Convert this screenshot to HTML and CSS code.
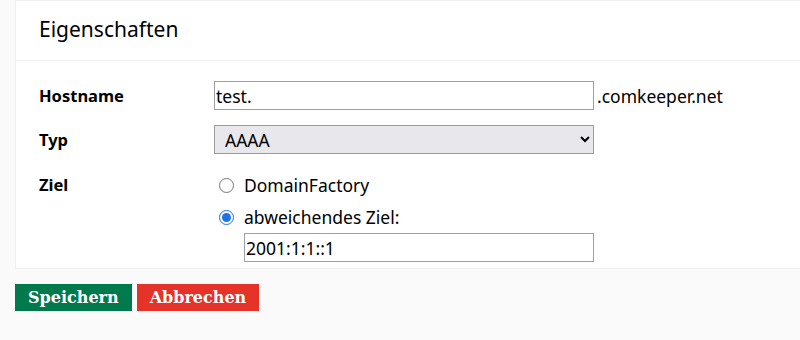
FILE: index.html
```html
<!DOCTYPE html>
<html lang="de">
<head>
    <meta charset="UTF-8">
    <title>Eigenschaften</title>
    <link rel="stylesheet" href="styles.css">
</head>
<body>

    <div class="panel">
        <h2 class="panel-title">Eigenschaften</h2>

        <form id="record-form" class="panel-body">
            <div class="row">
                <label for="hostname" class="row-label">Hostname</label>
                <div class="row-field">
                    <input type="text" id="hostname" class="text-input" value="test.">
                    <span class="suffix">.comkeeper.net</span>
                </div>
            </div>

            <div class="row">
                <label for="typ" class="row-label">Typ</label>
                <div class="row-field">
                    <select id="typ" class="select-input">
                        <option>A</option>
                        <option selected>AAAA</option>
                        <option>CNAME</option>
                        <option>MX</option>
                        <option>TXT</option>
                    </select>
                </div>
            </div>

            <div class="row row-top">
                <span class="row-label">Ziel</span>
                <div class="row-field options">
                    <label class="option">
                        <input type="radio" name="ziel" value="df">
                        DomainFactory
                    </label>
                    <label class="option">
                        <input type="radio" name="ziel" value="custom" checked>
                        abweichendes Ziel:
                    </label>
                    <input type="text" class="text-input target-input" value="2001:1:1::1">
                </div>
            </div>
        </form>
    </div>

    <div class="actions">
        <button type="submit" form="record-form" class="btn btn-save">Speichern</button>
        <button type="button" class="btn btn-cancel">Abbrechen</button>
    </div>

</body>
</html>
```

FILE: styles.css
```css
body {
    margin: 0;
    padding: 0 0 0 15px;
    background-color: #fafafa;
    font-family: "Noto Sans", sans-serif;
    font-size: 17.5px;
    color: #000;
}
.panel {
    background-color: #fff;
    border: 1px solid #f0f0f0;
    border-right: none;
}
.panel-title {
    margin: 0;
    padding: 14px 23px 0;
    height: 45px;
    font-size: 21px;
    font-weight: normal;
    border-bottom: 1px solid #f0f0f0;
}
.panel-body {
    padding: 20px 23px 6px;
}
.row {
    display: flex;
    align-items: center;
    margin-bottom: 15px;
}
.row-top {
    align-items: flex-start;
    margin-bottom: 0;
}
.row-label {
    width: 175px;
    font-size: 16.5px;
    font-weight: bold;
}
.row-top .row-label {
    padding-top: 4px;
}
.row-field {
    display: flex;
    align-items: center;
}
.text-input, .select-input {
    box-sizing: border-box;
    width: 380px;
    height: 29px;
    margin: 0;
    padding: 0 1px;
    border: 1px solid #a0a0a0;
    font-family: inherit;
    font-size: 17.5px;
    color: #000;
    background-color: #fff;
}
.select-input {
    padding: 0 8px 0 6px;
    background-color: #e8e7ec;
    border-color: #9a9a9a;
}
.suffix {
    margin-left: 3px;
}
.options {
    flex-direction: column;
    align-items: flex-start;
}
.option {
    display: flex;
    align-items: center;
    height: 32px;
}
.option input {
    margin: 0 10px 0 5px;
    width: 15px;
    height: 15px;
    accent-color: #1a73e8;
}
.target-input {
    width: 350px;
    margin-left: 30px;
}
.actions {
    display: flex;
    gap: 5px;
    margin-top: 15px;
}
.btn {
    height: 27px;
    padding: 0 13px;
    border: none;
    color: #fff;
    font-family: "DejaVu Serif", serif;
    font-weight: bold;
    font-size: 16px;
    cursor: pointer;
}
.btn-save {
    background-color: #007a4c;
}
.btn-cancel {
    background-color: #e5332a;
}
```
